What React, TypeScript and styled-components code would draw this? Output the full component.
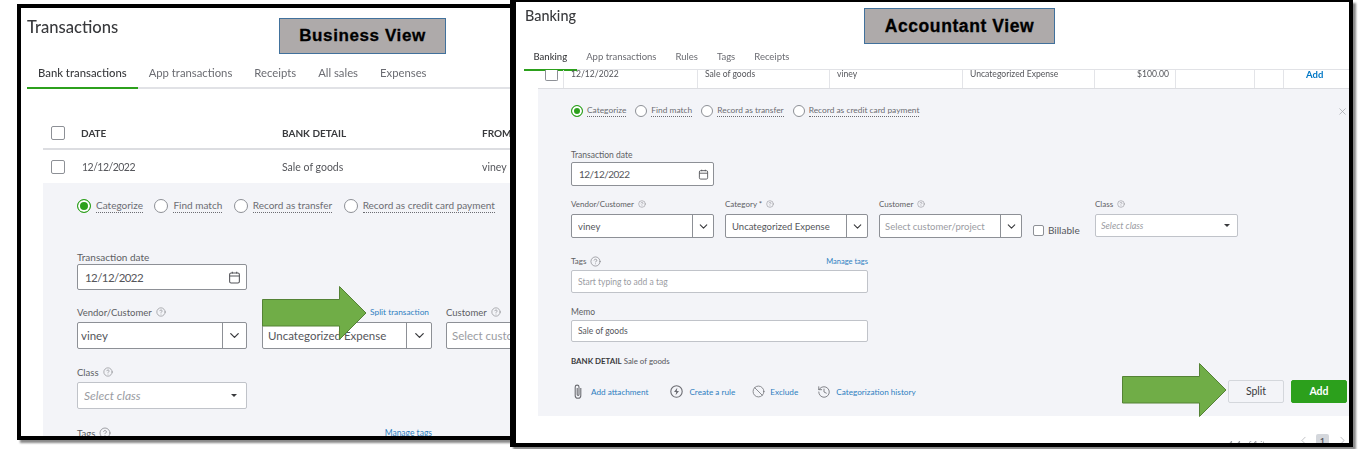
import React from "react";
import styled, { createGlobalStyle } from "styled-components";
import { Ban, ChevronDown, ChevronLeft, ChevronRight, CircleHelp, History, X } from "lucide-react";

const Global = createGlobalStyle`
  html, body { margin: 0; padding: 0; background: #fff; overflow: hidden; }
  * { box-sizing: border-box; }
  body { font-family: Lato, "Noto Sans", sans-serif; color: #393a3d; }
`;

const Canvas = styled.div`
  position: relative;
  width: 1368px;
  height: 449px;
  background: #fff;
  overflow: hidden;
`;

const Shot = styled.section<{ $left: number; $top: number; $w: number; $h: number; $bw: string }>`
  position: absolute;
  left: ${(p) => p.$left}px;
  top: ${(p) => p.$top}px;
  width: ${(p) => p.$w}px;
  height: ${(p) => p.$h}px;
  border-style: solid;
  border-color: #000;
  border-width: ${(p) => p.$bw};
  background: #fff;
  box-shadow: 3px 3px 2px #8a8a8a;
  display: flex;
  flex-direction: column;
`;

const ShotBody = styled.div`
  flex: 1;
  min-height: 0;
  display: flex;
  flex-direction: column;
  overflow: hidden;
  filter: blur(0.4px);
`;

const Title = styled.h1<{ $size: number; $h: number; $ml: number }>`
  margin: 0 0 0 ${(p) => p.$ml}px;
  height: ${(p) => p.$h}px;
  line-height: ${(p) => p.$h}px;
  font-size: ${(p) => p.$size}px;
  font-weight: 500;
  color: #393a3d;
  flex: none;
`;

const TabStrip = styled.nav<{ $mt: number; $h: number; $ml: number; $line: number }>`
  flex: none;
  display: flex;
  margin-top: ${(p) => p.$mt}px;
  margin-left: ${(p) => p.$ml}px;
  height: ${(p) => p.$h}px;
  border-bottom: ${(p) => p.$line}px solid #e1e2e6;
`;

const Tab = styled.span<{ $active?: boolean; $size: number; $pad: number; $bar: number; $top: number; $bottom: number }>`
  padding: ${(p) => p.$top}px ${(p) => p.$pad}px ${(p) => p.$bottom}px;
  height: calc(100% + ${(p) => (p.$bar === 2 ? 2 : 1)}px);
  display: flex;
  align-items: center;
  font-size: ${(p) => p.$size}px;
  font-weight: ${(p) => (p.$active ? 500 : 400)};
  color: ${(p) => (p.$active ? "#393a3d" : "#6b6c72")};
  border-bottom: ${(p) => p.$bar}px solid ${(p) => (p.$active ? "#2ca01c" : "transparent")};
`;

const Check = styled.span<{ $size: number }>`
  display: block;
  width: ${(p) => p.$size}px;
  height: ${(p) => p.$size}px;
  border: 1px solid #8d9096;
  border-radius: 2px;
  background: #fff;
  flex: none;
`;

const TableHead = styled.div`
  flex: none;
  margin: 29px 0 0 22px;
  height: 32px;
  display: grid;
  grid-template-columns: 38px 201px 200px 1fr;
  align-items: center;
  border-bottom: 2px solid #dcdde1;
  padding-bottom: 1px;
  font-size: 10px;
  font-weight: 700;
  color: #393a3d;
`;

const BizRow = styled.div`
  flex: none;
  margin-left: 22px;
  height: 33px;
  display: grid;
  grid-template-columns: 38px 201px 200px 1fr;
  align-items: center;
  font-size: 10.5px;
  color: #55565b;
`;

const CheckCell = styled.span`
  padding-left: 8px;
`;

const DateText = styled.span`
  letter-spacing: -0.05em;
  padding-left: 1px;
`;

const Panel = styled.div<{ $ml: number; $pl: number; $pt: number }>`
  position: relative;
  margin-left: ${(p) => p.$ml}px;
  padding: ${(p) => p.$pt}px 0 0 ${(p) => p.$pl}px;
  background: #f3f4f8;
`;

const RadioRow = styled.div<{ $size: number; $gap: number }>`
  display: flex;
  align-items: center;
  height: 20px;
  gap: ${(p) => p.$gap}px;
  font-size: ${(p) => p.$size}px;
  color: #6b6c72;
  white-space: nowrap;
`;

const RadioOption = styled.label<{ $gap: number }>`
  display: flex;
  align-items: center;
  gap: ${(p) => p.$gap}px;
`;

const Radio = styled.span<{ $on?: boolean; $size: number }>`
  width: ${(p) => p.$size}px;
  height: ${(p) => p.$size}px;
  border-radius: 50%;
  border: 1px solid ${(p) => (p.$on ? "#2ca01c" : "#8d9096")};
  background: ${(p) => (p.$on ? "#2ca01c" : "#fff")};
  box-shadow: ${(p) => (p.$on ? "inset 0 0 0 2px #fff" : "none")};
  flex: none;
`;

const RadioText = styled.span`
  border-bottom: 1px dotted #6b6c72;
  line-height: 1.25;
`;

const Label = styled.div<{ $size: number; $gap: number }>`
  display: flex;
  align-items: center;
  gap: 4px;
  height: 14px;
  margin-bottom: ${(p) => p.$gap}px;
  font-size: ${(p) => p.$size}px;
  color: #5d5e63;
  white-space: nowrap;
`;

const FieldLink = styled.a<{ $size: number; $mr?: number }>`
  margin-left: auto;
  margin-right: ${(p) => p.$mr ?? 0}px;
  font-size: ${(p) => p.$size}px;
  color: #2f7fc1;
`;

const Box = styled.div<{ $w: number; $h: number; $size: number; $soft?: boolean; $pl?: number }>`
  width: ${(p) => p.$w}px;
  height: ${(p) => p.$h}px;
  display: flex;
  align-items: center;
  padding-left: ${(p) => p.$pl ?? 6}px;
  background: #fff;
  border: 1px solid ${(p) => (p.$soft ? "#c0c3c9" : "#8d9096")};
  border-radius: 2px;
  font-size: ${(p) => p.$size}px;
  color: #55565b;
  white-space: nowrap;
  overflow: hidden;
`;

const BoxText = styled.span<{ $ph?: boolean; $italic?: boolean }>`
  flex: 1;
  min-width: 0;
  overflow: hidden;
  color: ${(p) => (p.$ph ? "#9a9ca2" : "#55565b")};
  font-style: ${(p) => (p.$italic ? "italic" : "normal")};
`;

const BoxEnd = styled.span<{ $w: number; $line?: boolean }>`
  flex: none;
  width: ${(p) => p.$w}px;
  height: 100%;
  display: flex;
  align-items: center;
  justify-content: center;
  color: #393a3d;
  border-left: ${(p) => (p.$line ? "1px solid #8d9096" : "none")};
`;

const Caret = styled.span`
  width: 0;
  height: 0;
  border-left: 3px solid transparent;
  border-right: 3px solid transparent;
  border-top: 3px solid #393a3d;
`;

const Columns = styled.div<{ $cols: string; $mt: number }>`
  display: grid;
  grid-template-columns: ${(p) => p.$cols};
  margin-top: ${(p) => p.$mt}px;
  align-items: start;
`;

const Field = styled.div<{ $w?: number; $mt?: number }>`
  width: ${(p) => (p.$w ? `${p.$w}px` : "auto")};
  margin-top: ${(p) => p.$mt ?? 0}px;
`;

const BankRow = styled.div`
  flex: none;
  margin-left: 22px;
  height: 19px;
  display: grid;
  grid-template-columns: 26px 134px 132px 133px 132px 81px 79px 29px 1fr;
  border-bottom: 1px solid #dcdde1;
  font-size: 8.6px;
  color: #55565b;
  overflow: hidden;
`;

const BankCell = styled.span<{ $right?: boolean; $pad?: number }>`
  border-right: 1px solid #e3e4e8;
  line-height: 9px;
  padding: 0 ${(p) => (p.$right ? 6 : 0)}px 0 ${(p) => p.$pad ?? 7}px;
  text-align: ${(p) => (p.$right ? "right" : "left")};
  white-space: nowrap;
  &:last-child { border-right: none; }
`;

const AddLink = styled(BankCell)`
  color: #0077c5;
  font-size: 9.5px;
  font-weight: 700;
  padding-left: 22px;
`;

const ClippedCheck = styled.span`
  display: block;
  margin-left: 7px;
  width: 13px;
  height: 11px;
  border: 1px solid #8d9096;
  border-top: none;
  border-radius: 0 0 2px 2px;
  background: #fff;
`;

const CloseMark = styled.span`
  position: absolute;
  top: 17px;
  right: 1px;
  color: #9a9ca2;
  display: flex;
`;

const BillableCell = styled.div`
  display: flex;
  align-items: center;
  gap: 4px;
  margin-top: 27px;
  font-size: 10px;
  color: #55565b;
`;

const DetailLine = styled.div`
  height: 14px;
  line-height: 14px;
  margin-top: 12px;
  font-size: 7.9px;
  color: #55565b;
`;

const DetailHead = styled.strong`
  font-weight: 700;
  color: #393a3d;
`;

const FooterRow = styled.div`
  display: flex;
  align-items: center;
  height: 24px;
  margin-top: 11px;
  padding-right: 2px;
  margin-bottom: 13px;
`;

const ActionList = styled.div`
  display: flex;
  align-items: center;
  flex: 1;
`;

const Action = styled.a<{ $ml: number; $gap: number }>`
  display: flex;
  align-items: center;
  gap: ${(p) => p.$gap}px;
  margin-left: ${(p) => p.$ml}px;
  font-size: 8.2px;
  color: #2f7fc1;
  padding-top: 1px;
  svg { color: #6b6c72; flex: none; }
`;

const Button = styled.button<{ $primary?: boolean }>`
  width: 56px;
  height: 23px;
  margin-left: 7px;
  padding: 0;
  border-radius: 2px;
  border: 1px solid ${(p) => (p.$primary ? "#2ca01c" : "#d4d7dc")};
  background: ${(p) => (p.$primary ? "#2ca01c" : "#f3f4f8")};
  color: ${(p) => (p.$primary ? "#fff" : "#393a3d")};
  font-family: inherit;
  font-size: 10.5px;
  font-weight: ${(p) => (p.$primary ? 700 : 400)};
`;

const Pager = styled.div`
  display: flex;
  justify-content: flex-end;
  align-items: flex-start;
  padding-top: 18px;
  font-size: 8.3px;
  color: #8d9096;
`;

const PagerText = styled.span`
  margin-right: 17px;
  line-height: 14px;
  padding-top: 3px;
`;

const PagerNum = styled.span`
  width: 13px;
  height: 14px;
  margin: 0 7px 0 6px;
  background: #d4d7dc;
  color: #55565b;
  font-weight: 700;
  text-align: center;
  line-height: 14px;
  border-radius: 2px;
`;

const ViewTag = styled.div<{ $left: number; $top: number; $w: number; $h: number; $size: number }>`
  position: absolute;
  left: ${(p) => p.$left}px;
  top: ${(p) => p.$top}px;
  width: ${(p) => p.$w}px;
  height: ${(p) => p.$h}px;
  display: flex;
  align-items: center;
  justify-content: center;
  background: #aeaaaa;
  border: 1px solid #41719c;
  font-family: "Liberation Sans", Arial, sans-serif;
  font-weight: 700;
  font-size: ${(p) => p.$size}px;
  letter-spacing: 0.6px;
  -webkit-text-stroke: 0.3px #000;
  color: #000;
`;

const ArrowWrap = styled.svg<{ $left: number; $top: number }>`
  position: absolute;
  left: ${(p) => p.$left}px;
  top: ${(p) => p.$top}px;
`;

const Arrow = ({ left, top }: { left: number; top: number }) => (
  <ArrowWrap $left={left} $top={top} width="105" height="54" viewBox="0 0 105 54">
    <polygon points="0.5,13.5 77.5,13.5 77.5,0.5 104,27 77.5,53.5 77.5,40 0.5,40" fill="#70ad47" stroke="#548235" strokeWidth="1" />
  </ArrowWrap>
);

const Calendar = ({ s }: { s: number }) => (
  <svg width={s} height={s} viewBox="0 0 12 12" fill="none" stroke="#55565b" strokeWidth="1">
    <rect x="1.5" y="1.8" width="9" height="9.2" rx="1.4" />
    <path d="M1.5 4.6h9M4 .8v1.6M8 .8v1.6" />
  </svg>
);

const Clip = () => (
  <svg width="8" height="15" viewBox="0 0 8 15" fill="none" stroke="#6b6c72" strokeWidth="1.1">
    <path d="M6.8 4v7.4a2.8 2.8 0 0 1-5.6 0V3a1.9 1.9 0 0 1 3.8 0v7.6a.9.9 0 0 1-1.8 0V4" />
  </svg>
);

const RuleIcon = () => (
  <svg width="13" height="13" viewBox="0 0 13 13" fill="none">
    <circle cx="6.5" cy="6.5" r="5.7" stroke="#6b6c72" strokeWidth="1.1" />
    <path d="M7.3 2.8 4 7h2.2l-.6 3.2L9 6H6.8z" fill="#6b6c72" />
  </svg>
);

const Help = ({ s }: { s: number }) => <CircleHelp size={s} strokeWidth={1.4} color="#7b7c82" />;

const bizTab = { $size: 11.3, $pad: 11, $bar: 2, $top: 0, $bottom: 2 };
const bankTab = { $size: 9.5, $pad: 9.5, $bar: 2, $top: 3, $bottom: 0 };

export default function App() {
  return (
    <Canvas>
      <Global />

      <Shot $left={17} $top={4} $w={497} $h={436} $bw="4px">
        <ShotBody>
          <Title $size={16.6} $h={38} $ml={6}>Transactions</Title>
          <TabStrip $mt={14} $h={29} $ml={6} $line={2}>
            <Tab $active {...bizTab}>Bank transactions</Tab>
            <Tab {...bizTab}>App transactions</Tab>
            <Tab {...bizTab}>Receipts</Tab>
            <Tab {...bizTab}>All sales</Tab>
            <Tab {...bizTab}>Expenses</Tab>
          </TabStrip>
          <TableHead>
            <CheckCell><Check $size={14} /></CheckCell>
            <span>DATE</span>
            <span>BANK DETAIL</span>
            <span>FROM/TO</span>
          </TableHead>
          <BizRow>
            <CheckCell><Check $size={14} /></CheckCell>
            <DateText>12/12/2022</DateText>
            <span>Sale of goods</span>
            <span>viney</span>
          </BizRow>
          <Panel $ml={22} $pl={34} $pt={13}>
            <RadioRow $size={10} $gap={11.5}>
              <RadioOption $gap={5}><Radio $on $size={14} /><RadioText>Categorize</RadioText></RadioOption>
              <RadioOption $gap={5}><Radio $size={14} /><RadioText>Find match</RadioText></RadioOption>
              <RadioOption $gap={5}><Radio $size={14} /><RadioText>Record as transfer</RadioText></RadioOption>
              <RadioOption $gap={5}><Radio $size={14} /><RadioText>Record as credit card payment</RadioText></RadioOption>
            </RadioRow>
            <Field $w={170} $mt={34}>
              <Label $size={10} $gap={0}>Transaction date</Label>
              <Box $w={170} $h={26} $size={11.5}>
                <BoxText><DateText>12/12/2022</DateText></BoxText>
                <BoxEnd $w={24}><Calendar s={13} /></BoxEnd>
              </Box>
            </Field>
            <Columns $cols="185px 184px 200px" $mt={15}>
              <Field $w={170}>
                <Label $size={9.5} $gap={3}>Vendor/Customer <Help s={10} /></Label>
                <Box $w={170} $h={27} $size={11.5} $pl={3}>
                  <BoxText>viney</BoxText>
                  <BoxEnd $w={24} $line><ChevronDown size={15} strokeWidth={2} /></BoxEnd>
                </Box>
              </Field>
              <Field $w={170}>
                <Label $size={9.5} $gap={3}>Category * <FieldLink $size={8.3} $mr={3}>Split transaction</FieldLink></Label>
                <Box $w={170} $h={27} $size={11.5} $pl={5}>
                  <BoxText>Uncategorized Expense</BoxText>
                  <BoxEnd $w={25} $line><ChevronDown size={15} strokeWidth={2} /></BoxEnd>
                </Box>
              </Field>
              <Field $w={170}>
                <Label $size={9.5} $gap={3}>Customer <Help s={10} /></Label>
                <Box $w={170} $h={27} $size={11.5} $pl={5}>
                  <BoxText $ph>Select customer/project</BoxText>
                </Box>
              </Field>
            </Columns>
            <Field $w={170} $mt={16}>
              <Label $size={9.5} $gap={3}>Class <Help s={10} /></Label>
              <Box $w={170} $h={27} $size={12} $soft>
                <BoxText $ph $italic>Select class</BoxText>
                <BoxEnd $w={24}><Caret /></BoxEnd>
              </Box>
            </Field>
            <Field $w={355} $mt={17}>
              <Label $size={9.5} $gap={3}>Tags <Help s={12} /><FieldLink $size={8.5}>Manage tags</FieldLink></Label>
            </Field>
          </Panel>
        </ShotBody>
      </Shot>
      <ViewTag $left={279} $top={18} $w={167} $h={36} $size={17}>Business View</ViewTag>
      <Arrow left={262} top={286} />

      <Shot $left={510} $top={0} $w={843} $h={447} $bw="2px 4px 4px 6px">
        <ShotBody>
          <Title $size={14.4} $h={28} $ml={9}>Banking</Title>
          <TabStrip $mt={10} $h={30} $ml={8} $line={1}>
            <Tab $active {...bankTab}>Banking</Tab>
            <Tab {...bankTab}>App transactions</Tab>
            <Tab {...bankTab}>Rules</Tab>
            <Tab {...bankTab}>Tags</Tab>
            <Tab {...bankTab}>Receipts</Tab>
          </TabStrip>
          <BankRow>
            <BankCell $pad={0}><ClippedCheck /></BankCell>
            <BankCell>12/12/2022</BankCell>
            <BankCell>Sale of goods</BankCell>
            <BankCell>viney</BankCell>
            <BankCell>Uncategorized Expense</BankCell>
            <BankCell $right>$100.00</BankCell>
            <BankCell />
            <BankCell />
            <AddLink>Add</AddLink>
          </BankRow>
          <Panel $ml={22} $pl={33} $pt={12}>
            <CloseMark><X size={11} strokeWidth={1.4} /></CloseMark>
            <RadioRow $size={8.4} $gap={9}>
              <RadioOption $gap={4}><Radio $on $size={12} /><RadioText>Categorize</RadioText></RadioOption>
              <RadioOption $gap={4}><Radio $size={12} /><RadioText>Find match</RadioText></RadioOption>
              <RadioOption $gap={4}><Radio $size={12} /><RadioText>Record as transfer</RadioText></RadioOption>
              <RadioOption $gap={4}><Radio $size={12} /><RadioText>Record as credit card payment</RadioText></RadioOption>
            </RadioRow>
            <Field $w={143} $mt={27}>
              <Label $size={8.5} $gap={0}>Transaction date</Label>
              <Box $w={143} $h={24} $size={10}>
                <BoxText><DateText>12/12/2022</DateText></BoxText>
                <BoxEnd $w={20}><Calendar s={11} /></BoxEnd>
              </Box>
            </Field>
            <Columns $cols="154px 154px 154px 62px 143px" $mt={11}>
              <Field $w={143}>
                <Label $size={8} $gap={3}>Vendor/Customer <Help s={8} /></Label>
                <Box $w={143} $h={24} $size={9.5}>
                  <BoxText>viney</BoxText>
                  <BoxEnd $w={21} $line><ChevronDown size={13} strokeWidth={2} /></BoxEnd>
                </Box>
              </Field>
              <Field $w={143}>
                <Label $size={8} $gap={3}>Category * <Help s={8} /></Label>
                <Box $w={143} $h={24} $size={9.5}>
                  <BoxText>Uncategorized Expense</BoxText>
                  <BoxEnd $w={21} $line><ChevronDown size={13} strokeWidth={2} /></BoxEnd>
                </Box>
              </Field>
              <Field $w={143}>
                <Label $size={8} $gap={3}>Customer <Help s={8} /></Label>
                <Box $w={143} $h={24} $size={9.5} $pl={5}>
                  <BoxText $ph>Select customer/project</BoxText>
                  <BoxEnd $w={21} $line><ChevronDown size={13} strokeWidth={2} /></BoxEnd>
                </Box>
              </Field>
              <BillableCell><Check $size={11} />Billable</BillableCell>
              <Field $w={143}>
                <Label $size={8} $gap={3}>Class <Help s={8} /></Label>
                <Box $w={143} $h={23} $size={9} $soft $pl={5}>
                  <BoxText $ph $italic>Select class</BoxText>
                  <BoxEnd $w={21}><Caret /></BoxEnd>
                </Box>
              </Field>
            </Columns>
            <Field $w={297} $mt={16}>
              <Label $size={8} $gap={2}>Tags <Help s={11} /><FieldLink $size={7.5}>Manage tags</FieldLink></Label>
              <Box $w={297} $h={23} $size={8.5} $soft>
                <BoxText $ph>Start typing to add a tag</BoxText>
              </Box>
            </Field>
            <Field $w={297} $mt={12}>
              <Label $size={8.5} $gap={1}>Memo</Label>
              <Box $w={297} $h={22} $size={8.5} $soft>
                <BoxText>Sale of goods</BoxText>
              </Box>
            </Field>
            <DetailLine><DetailHead>BANK DETAIL</DetailHead> Sale of goods</DetailLine>
            <FooterRow>
              <ActionList>
                <Action $ml={3} $gap={9}><Clip />Add attachment</Action>
                <Action $ml={22} $gap={6}><RuleIcon />Create a rule</Action>
                <Action $ml={17} $gap={5}><Ban size={13} strokeWidth={1.4} />Exclude</Action>
                <Action $ml={19} $gap={5}><History size={14} strokeWidth={1.4} />Categorization history</Action>
              </ActionList>
              <Button>Split</Button>
              <Button $primary>Add</Button>
            </FooterRow>
          </Panel>
          <Pager>
            <PagerText>1-1 of 1 items</PagerText>
            <ChevronLeft size={13} strokeWidth={1} />
            <PagerNum>1</PagerNum>
            <ChevronRight size={13} strokeWidth={1} />
          </Pager>
        </ShotBody>
      </Shot>
      <ViewTag $left={864} $top={8} $w={191} $h={36} $size={17.5}>Accountant View</ViewTag>
      <Arrow left={1122} top={363} />
    </Canvas>
  );
}
